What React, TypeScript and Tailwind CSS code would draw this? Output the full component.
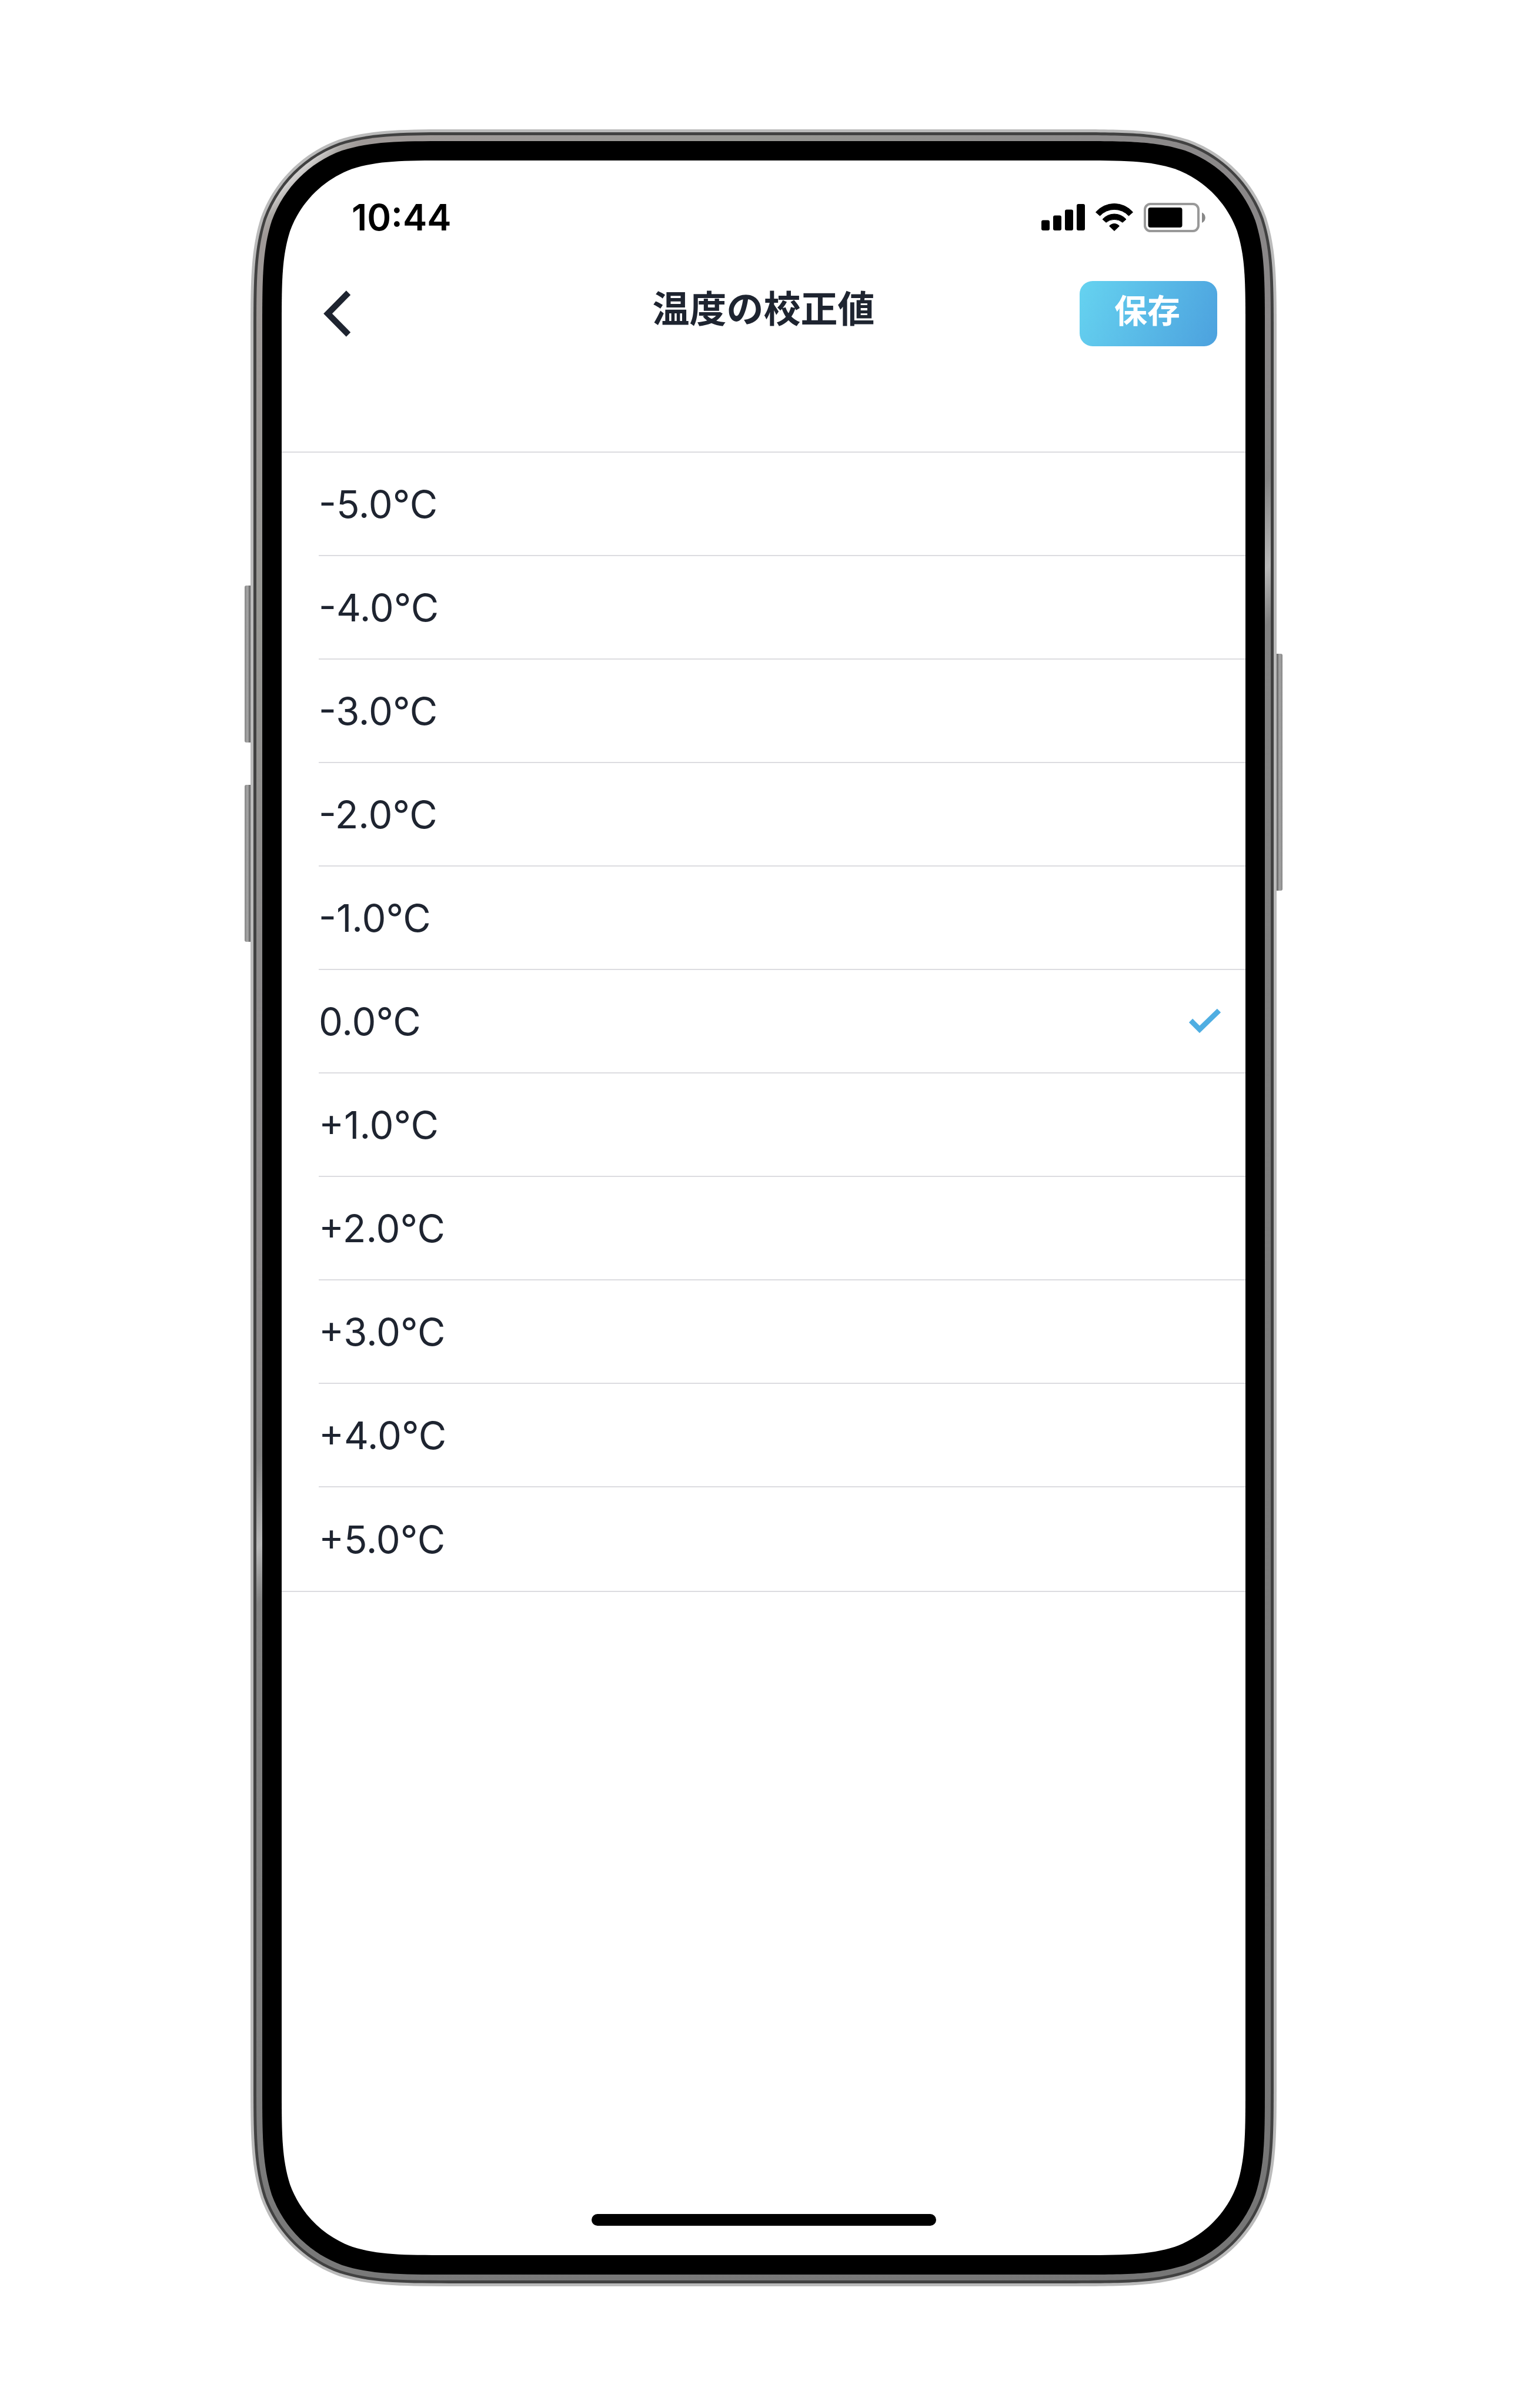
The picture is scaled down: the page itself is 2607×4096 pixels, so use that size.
import { useState } from "react";

const OFFSETS = [-5, -4, -3, -2, -1, 0, 1, 2, 3, 4, 5];

const FRAME_W = 1745;
const FRAME_H = 3669;

// shells of the phone body, from the outer rim to the screen
const SHELLS = [
  { inset: 0, radius: 237, fill: "#bbbbbb" },
  { inset: 5, radius: 232, fill: "#414141" },
  { inset: 10, radius: 226, fill: "url(#steel)" },
  { inset: 20, radius: 215, fill: "#000000" },
  { inset: 53, radius: 190, fill: "#ffffff" },
];

function formatOffset(value: number) {
  const sign = value > 0 ? "+" : "";
  return `${sign}${value.toFixed(1)}°C`;
}

// rounded rectangle with continuous corners
function squirclePath(inset: number, r: number) {
  const x0 = inset;
  const y0 = inset;
  const x1 = FRAME_W - inset;
  const y1 = FRAME_H - inset;
  const a = 1.52866 * r;
  const b = 1.08849 * r;
  const c = 0.86841 * r;
  const d = 0.63149 * r;
  const e = 0.37282 * r;
  const f = 0.16906 * r;
  const g = 0.07491 * r;

  return [
    `M${x0 + a} ${y0} L${x1 - a} ${y0}`,
    `C${x1 - b} ${y0} ${x1 - c} ${y0} ${x1 - d} ${y0 + g}`,
    `C${x1 - e} ${y0 + f} ${x1 - f} ${y0 + e} ${x1 - g} ${y0 + d}`,
    `C${x1} ${y0 + c} ${x1} ${y0 + b} ${x1} ${y0 + a}`,
    `L${x1} ${y1 - a}`,
    `C${x1} ${y1 - b} ${x1} ${y1 - c} ${x1 - g} ${y1 - d}`,
    `C${x1 - f} ${y1 - e} ${x1 - e} ${y1 - f} ${x1 - d} ${y1 - g}`,
    `C${x1 - c} ${y1} ${x1 - b} ${y1} ${x1 - a} ${y1}`,
    `L${x0 + a} ${y1}`,
    `C${x0 + b} ${y1} ${x0 + c} ${y1} ${x0 + d} ${y1 - g}`,
    `C${x0 + e} ${y1 - f} ${x0 + f} ${y1 - e} ${x0 + g} ${y1 - d}`,
    `C${x0} ${y1 - c} ${x0} ${y1 - b} ${x0} ${y1 - a}`,
    `L${x0} ${y0 + a}`,
    `C${x0} ${y0 + b} ${x0} ${y0 + c} ${x0 + g} ${y0 + d}`,
    `C${x0 + f} ${y0 + e} ${x0 + e} ${y0 + f} ${x0 + d} ${y0 + g}`,
    `C${x0 + c} ${y0} ${x0 + b} ${y0} ${x0 + a} ${y0}Z`,
  ].join(" ");
}

function Bezel() {
  return (
    <svg
      className="absolute inset-0 w-full h-full"
      viewBox={`0 0 ${FRAME_W} ${FRAME_H}`}
      preserveAspectRatio="none"
      aria-hidden="true"
    >
      <defs>
        <linearGradient id="steel" gradientUnits="userSpaceOnUse" x1="0" y1="0" x2="2680" y2="2761">
          <stop offset="0" stopColor="#c4c2c1" />
          <stop offset="0.029" stopColor="#d0cecd" />
          <stop offset="0.0335" stopColor="#aba8a5" />
          <stop offset="0.038" stopColor="#9f9997" />
          <stop offset="0.1" stopColor="#9b9896" />
          <stop offset="0.155" stopColor="#979793" />
          <stop offset="0.26" stopColor="#8c8a8a" />
          <stop offset="0.38" stopColor="#898687" />
          <stop offset="0.424" stopColor="#848484" />
          <stop offset="0.452" stopColor="#b8b8b8" />
          <stop offset="0.47" stopColor="#828282" />
          <stop offset="0.7" stopColor="#797979" />
          <stop offset="1" stopColor="#767676" />
        </linearGradient>
      </defs>
      {SHELLS.map((shell) => (
        <path key={shell.inset} d={squirclePath(shell.inset, shell.radius)} fill={shell.fill} />
      ))}
    </svg>
  );
}

function SideButtons() {
  return (
    <>
      <div className="absolute -left-[10px] top-[776px] w-[10px] h-[267px] rounded-l-[3px] bg-linear-to-r from-[#858585] via-[#a8a8a8] to-[#5c5c5c]" />
      <div className="absolute -left-[10px] top-[1115px] w-[10px] h-[267px] rounded-l-[3px] bg-linear-to-r from-[#858585] via-[#a8a8a8] to-[#5c5c5c]" />
      <div className="absolute -right-[10px] top-[892px] w-[10px] h-[403px] rounded-r-[3px] bg-linear-to-l from-[#858585] via-[#a8a8a8] to-[#5c5c5c]" />
    </>
  );
}

function StatusBar() {
  return (
    <div className="h-[193px] pl-[119px] pr-[68px] flex items-center justify-between text-black">
      <span className="text-[62px] leading-none font-semibold">10:44</span>

      <div className="flex items-center gap-[18px]">
        <svg width="74" height="45" viewBox="0 0 74 45" aria-label="Signal">
          <rect x="0" y="27.5" width="14" height="17.5" rx="3" />
          <rect x="20" y="19.5" width="14" height="25.5" rx="3" />
          <rect x="40" y="9.5" width="14" height="35.5" rx="3" />
          <rect x="60" y="0" width="14" height="45" rx="3" />
        </svg>
        <svg width="64" height="48" viewBox="0 0 64 48" aria-label="Wi-Fi">
          <g stroke="#000" strokeWidth="1" strokeLinejoin="round">
            <path d="M0.5 15A41.5 41.5 0 0 1 63.5 15L56.5 21A33.4 33.4 0 0 0 7.5 21Z" />
            <path d="M12 27A26.8 26.8 0 0 1 52 27L46 32.3A22 22 0 0 0 18 32.3Z" />
            <path d="M32 46.6L23.6 38.5A11 11 0 0 1 40.4 38.5Z" />
          </g>
        </svg>
        <svg width="105" height="50" viewBox="0 0 105 50" aria-label="Battery">
          <rect x="2" y="2" width="91" height="46" rx="9.5" fill="none" stroke="#999999" strokeWidth="4" />
          <rect x="7.5" y="8" width="58" height="34" rx="4" />
          <path d="M99 16.4C106.6 19.5 106.6 31 99 34Z" fill="#888888" />
        </svg>
      </div>
    </div>
  );
}

function NavBar() {
  return (
    <header className="h-[134px] px-[48px] grid grid-cols-[1fr_auto_1fr] items-center">
      <button type="button" aria-label="戻る" className="justify-self-start px-[23px] py-2">
        <svg width="48" height="79" viewBox="0 0 48 79" fill="none">
          <path d="M42.5 4L7.5 39.5L42.5 75" stroke="#1e2430" strokeWidth="10.4" />
        </svg>
      </button>
      <h1 className="pb-4 text-[63px] leading-none font-bold text-[#1e2430]">温度の校正値</h1>
      <button
        type="button"
        className="justify-self-end w-[234px] h-[111px] pb-2 pr-1 rounded-[22px] bg-linear-[112deg] from-[#66d3f0] to-[#4ca1de] text-[56px] leading-none font-bold text-white"
      >
        保存
      </button>
    </header>
  );
}

export default function App() {
  const [selected, setSelected] = useState(0);

  return (
    <div className="min-h-screen flex flex-col bg-white pt-[220px] pb-[207px] pl-[426px] pr-[436px] font-['Inter','Noto_Sans_CJK_JP',sans-serif]">
      <div className="relative flex-1 flex flex-col p-[53px]">
        <SideButtons />
        <Bezel />

        <div className="relative flex-1 flex flex-col">
          <StatusBar />
          <NavBar />

          <fieldset aria-label="温度の校正値" className="mt-[168px] border-y-2 border-[#dcdce0]">
            {OFFSETS.map((value, index) => (
              <label
                key={value}
                className={`ml-[63px] h-[176px] pr-[42px] flex items-center justify-between text-[65px] leading-none text-[#1e2430] ${
                  index < OFFSETS.length - 1 ? "border-b-2 border-[#dcdce0]" : ""
                }`}
              >
                <input
                  type="radio"
                  name="offset"
                  className="sr-only"
                  checked={selected === value}
                  onChange={() => setSelected(value)}
                />
                <span>{formatOffset(value)}</span>
                {selected === value && (
                  <svg width="54" height="42" viewBox="0 0 54 42" fill="none" aria-hidden="true">
                    <path d="M3 20L18 35L51 3" stroke="#4faee2" strokeWidth="9" />
                  </svg>
                )}
              </label>
            ))}
          </fieldset>

          <div className="mt-auto mb-[50px] self-center w-[586px] h-5 rounded-full bg-black" />
        </div>
      </div>
    </div>
  );
}
